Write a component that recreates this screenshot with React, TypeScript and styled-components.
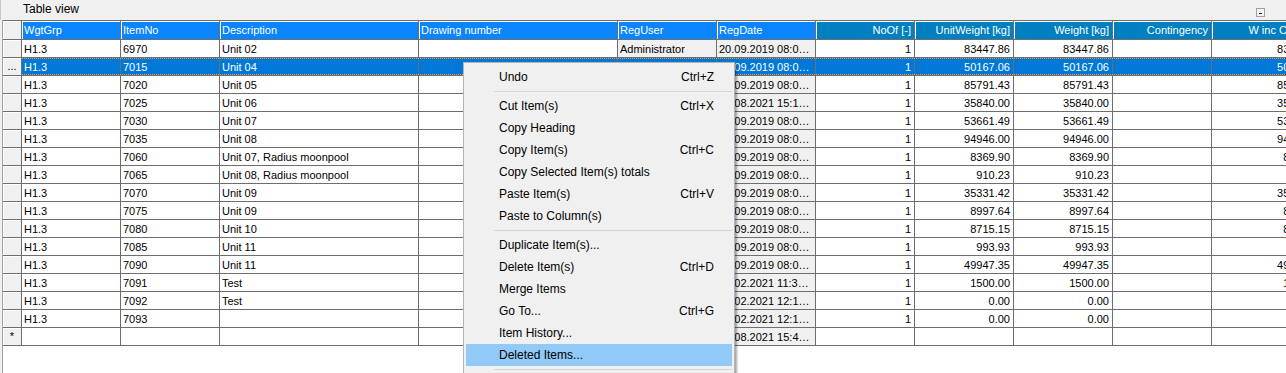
import React from "react";
import styled, { createGlobalStyle } from "styled-components";

const GlobalStyle = createGlobalStyle`
  html, body {
    margin: 0;
    padding: 0;
    background: #f0f0f0;
    overflow: hidden;
  }
  #root {
    height: 373px;
  }
`;

type Align = "left" | "right";
type Tone = "bright" | "dark";

interface Column {
  key: string;
  title: string;
  width: number;
  align: Align;
  tone: Tone;
  locked?: boolean;
}

interface Item {
  grp: string;
  no: string;
  desc: string;
  user: string;
  date: string;
  noOf: string;
  unit: string;
  weight: string;
}

const columns: Column[] = [
  { key: "grp", title: "WgtGrp", width: 99, align: "left", tone: "bright" },
  { key: "no", title: "ItemNo", width: 99, align: "left", tone: "bright" },
  { key: "desc", title: "Description", width: 199, align: "left", tone: "bright" },
  { key: "drw", title: "Drawing number", width: 199, align: "left", tone: "bright" },
  { key: "user", title: "RegUser", width: 99, align: "left", tone: "bright", locked: true },
  { key: "date", title: "RegDate", width: 99, align: "left", tone: "bright", locked: true },
  { key: "noOf", title: "NoOf [-]", width: 99, align: "right", tone: "dark" },
  { key: "unit", title: "UnitWeight [kg]", width: 99, align: "right", tone: "dark" },
  { key: "weight", title: "Weight [kg]", width: 99, align: "right", tone: "dark" },
  { key: "cont", title: "Contingency", width: 99, align: "right", tone: "dark" },
  { key: "winc", title: "W inc Cont [kg]", width: 115, align: "right", tone: "dark" },
];

const d19 = "20.09.2019 08:0…";

const items: Item[] = [
  { grp: "H1.3", no: "6970", desc: "Unit 02", user: "Administrator", date: d19, noOf: "1", unit: "83447.86", weight: "83447.86" },
  { grp: "H1.3", no: "7015", desc: "Unit 04", user: "Administrator", date: d19, noOf: "1", unit: "50167.06", weight: "50167.06" },
  { grp: "H1.3", no: "7020", desc: "Unit 05", user: "Administrator", date: d19, noOf: "1", unit: "85791.43", weight: "85791.43" },
  { grp: "H1.3", no: "7025", desc: "Unit 06", user: "Administrator", date: "12.08.2021 15:1…", noOf: "1", unit: "35840.00", weight: "35840.00" },
  { grp: "H1.3", no: "7030", desc: "Unit 07", user: "Administrator", date: d19, noOf: "1", unit: "53661.49", weight: "53661.49" },
  { grp: "H1.3", no: "7035", desc: "Unit 08", user: "Administrator", date: d19, noOf: "1", unit: "94946.00", weight: "94946.00" },
  { grp: "H1.3", no: "7060", desc: "Unit 07, Radius moonpool", user: "Administrator", date: d19, noOf: "1", unit: "8369.90", weight: "8369.90" },
  { grp: "H1.3", no: "7065", desc: "Unit 08, Radius moonpool", user: "Administrator", date: d19, noOf: "1", unit: "910.23", weight: "910.23" },
  { grp: "H1.3", no: "7070", desc: "Unit 09", user: "Administrator", date: d19, noOf: "1", unit: "35331.42", weight: "35331.42" },
  { grp: "H1.3", no: "7075", desc: "Unit 09", user: "Administrator", date: d19, noOf: "1", unit: "8997.64", weight: "8997.64" },
  { grp: "H1.3", no: "7080", desc: "Unit 10", user: "Administrator", date: d19, noOf: "1", unit: "8715.15", weight: "8715.15" },
  { grp: "H1.3", no: "7085", desc: "Unit 11", user: "Administrator", date: d19, noOf: "1", unit: "993.93", weight: "993.93" },
  { grp: "H1.3", no: "7090", desc: "Unit 11", user: "Administrator", date: d19, noOf: "1", unit: "49947.35", weight: "49947.35" },
  { grp: "H1.3", no: "7091", desc: "Test", user: "Administrator", date: "15.02.2021 11:3…", noOf: "1", unit: "1500.00", weight: "1500.00" },
  { grp: "H1.3", no: "7092", desc: "Test", user: "Administrator", date: "15.02.2021 12:1…", noOf: "1", unit: "0.00", weight: "0.00" },
  { grp: "H1.3", no: "7093", desc: "", user: "Administrator", date: "15.02.2021 12:1…", noOf: "1", unit: "0.00", weight: "0.00" },
];

const SELECTED = 1;

type MenuEntry = { label: string; shortcut?: string; active?: boolean } | "sep";

const menu: MenuEntry[] = [
  { label: "Undo", shortcut: "Ctrl+Z" },
  "sep",
  { label: "Cut Item(s)", shortcut: "Ctrl+X" },
  { label: "Copy Heading" },
  { label: "Copy Item(s)", shortcut: "Ctrl+C" },
  { label: "Copy Selected Item(s) totals" },
  { label: "Paste Item(s)", shortcut: "Ctrl+V" },
  { label: "Paste to Column(s)" },
  "sep",
  { label: "Duplicate Item(s)..." },
  { label: "Delete Item(s)", shortcut: "Ctrl+D" },
  { label: "Merge Items" },
  { label: "Go To...", shortcut: "Ctrl+G" },
  { label: "Item History..." },
  { label: "Deleted Items...", active: true },
  "sep",
  { label: "Properties..." },
];

const GRID_LINE = "#6e6e6e";

const Page = styled.div`
  position: relative;
  height: 373px;
  display: flex;
  flex-direction: column;
  overflow: hidden;
  font-family: "Liberation Sans", Arial, sans-serif;
  font-size: 11px;
  color: #000;
`;

const TitleBar = styled.div`
  height: 20px;
  flex-shrink: 0;
  display: flex;
  align-items: center;
  justify-content: space-between;
  padding: 0 21px 2px 22px;
  box-sizing: border-box;
  border-left: 1px solid #c8c8c8;
  font-size: 12px;
`;

const TitleText = styled.span`
  line-height: 14px;
`;

const CollapseBox = styled.svg`
  display: block;
  margin-top: 7px;
`;

const Grid = styled.div`
  flex: 1;
  margin-left: 2px;
  border-left: 1px solid #a0a0a0;
  background: #fff;
  overflow: hidden;
`;

const Row = styled.div`
  display: flex;
  width: max-content;
`;

const RowHead = styled.div<{ $header?: boolean }>`
  width: 19px;
  height: ${(p) => (p.$header ? 20 : 18)}px;
  flex-shrink: 0;
  box-sizing: border-box;
  background: #f0f0f0;
  border-right: 1px solid ${GRID_LINE};
  border-bottom: 1px solid ${GRID_LINE};
  border-top: ${(p) => (p.$header ? `1px solid ${GRID_LINE}` : "none")};
  box-shadow: inset 1px 1px 0 #fff;
  display: flex;
  align-items: center;
  justify-content: center;
  font-size: 11px;
  line-height: 1;
`;

const Cells = styled.div<{ $selected?: boolean }>`
  display: flex;
  position: relative;

  ${(p) =>
    p.$selected &&
    `
    &::after {
      content: "";
      position: absolute;
      left: 0;
      right: 0;
      top: 0;
      bottom: 1px;
      border-top: 1px dotted #f59a3a;
      border-bottom: 1px dotted #f59a3a;
      pointer-events: none;
    }
  `}
`;

const HeadCell = styled.div<{ $w: number; $align: Align; $tone: Tone }>`
  width: ${(p) => p.$w}px;
  height: 20px;
  flex-shrink: 0;
  box-sizing: border-box;
  padding: 0 3px 0 2px;
  background: ${(p) => (p.$tone === "bright" ? "#0a84ff" : "#0080c0")};
  color: #fff;
  border-top: 1px solid ${GRID_LINE};
  border-bottom: 1px solid ${GRID_LINE};
  border-right: 1px solid ${GRID_LINE};
  box-shadow: inset 1px 1px 0 #fff;
  display: flex;
  align-items: center;
  justify-content: ${(p) => (p.$align === "right" ? "flex-end" : "flex-start")};
  white-space: nowrap;
  overflow: hidden;
`;

const Cell = styled.div<{ $w: number; $align: Align; $locked?: boolean; $selected?: boolean }>`
  width: ${(p) => p.$w}px;
  height: 18px;
  flex-shrink: 0;
  box-sizing: border-box;
  padding: 0 3px 0 2px;
  background: ${(p) => (p.$selected ? "#0078d7" : p.$locked ? "#f0f0f0" : "#fff")};
  color: ${(p) => (p.$selected ? "#fff" : "#000")};
  border-right: 1px solid ${GRID_LINE};
  border-bottom: 1px solid ${GRID_LINE};
  display: flex;
  align-items: center;
  justify-content: ${(p) => (p.$align === "right" ? "flex-end" : "flex-start")};
  white-space: nowrap;
  overflow: hidden;
`;

const Menu = styled.div`
  position: absolute;
  left: 463px;
  top: 62px;
  width: 272px;
  box-sizing: border-box;
  padding: 3px 2px;
  background: #f0f0f0;
  border: 1px solid #b4b4b4;
  box-shadow: 2px 2px 2px rgba(0, 0, 0, 0.35);
  font-family: "Liberation Sans", Arial, sans-serif;
  font-size: 12px;
  color: #000;
`;

const MenuItem = styled.div<{ $active?: boolean }>`
  height: 22px;
  display: flex;
  align-items: center;
  justify-content: space-between;
  padding: 0 18px 0 33px;
  background: ${(p) => (p.$active ? "#91c9f7" : "transparent")};
`;

const MenuSeparator = styled.div`
  height: 1px;
  margin: 3px 0 3px 28px;
  background: #d5d5d5;
`;

const columnValue = (item: Item, key: string) => {
  switch (key) {
    case "grp":
      return item.grp;
    case "no":
      return item.no;
    case "desc":
      return item.desc;
    case "user":
      return item.user;
    case "date":
      return item.date;
    case "noOf":
      return item.noOf;
    case "unit":
      return item.unit;
    case "weight":
      return item.weight;
    case "winc":
      return item.weight;
    default:
      return "";
  }
};

export default function App() {
  return (
    <>
      <GlobalStyle />
      <Page>
        <TitleBar>
          <TitleText>Table view</TitleText>
          <CollapseBox width="9" height="9" viewBox="0 0 9 9">
            <rect x="0.5" y="0.5" width="8" height="8" fill="#f4f4f4" stroke="#a0a0a0" />
            <rect x="3" y="5" width="3" height="1" fill="#202020" />
          </CollapseBox>
        </TitleBar>

        <Grid>
          <Row>
            <RowHead $header />
            <Cells>
              {columns.map((c) => (
                <HeadCell key={c.key} $w={c.width} $align={c.align} $tone={c.tone}>
                  {c.title}
                </HeadCell>
              ))}
            </Cells>
          </Row>

          {items.map((item, i) => {
            const selected = i === SELECTED;
            return (
              <Row key={item.no}>
                <RowHead>{selected ? "..." : ""}</RowHead>
                <Cells $selected={selected}>
                  {columns.map((c) => (
                    <Cell
                      key={c.key}
                      $w={c.width}
                      $align={c.align}
                      $locked={c.locked}
                      $selected={selected}
                    >
                      {columnValue(item, c.key)}
                    </Cell>
                  ))}
                </Cells>
              </Row>
            );
          })}

          <Row>
            <RowHead>*</RowHead>
            <Cells>
              {columns.map((c) => (
                <Cell key={c.key} $w={c.width} $align={c.align} $locked={c.locked}>
                  {c.key === "date" ? "23.08.2021 15:4…" : ""}
                </Cell>
              ))}
            </Cells>
          </Row>
        </Grid>

        <Menu>
          {menu.map((m, i) =>
            m === "sep" ? (
              <MenuSeparator key={i} />
            ) : (
              <MenuItem key={i} $active={m.active}>
                <span>{m.label}</span>
                <span>{m.shortcut}</span>
              </MenuItem>
            )
          )}
        </Menu>
      </Page>
    </>
  );
}
